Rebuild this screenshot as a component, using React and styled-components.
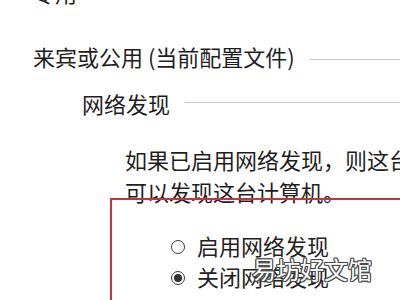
import React from 'react'
import styled, { createGlobalStyle } from 'styled-components'

const GlobalStyle = createGlobalStyle`
  html, body {
    margin: 0;
    padding: 0;
    background: #fff;
  }
  body {
    width: 400px;
    height: 300px;
    overflow: hidden;
    font-family: "Noto Sans CJK SC", "Noto Sans", sans-serif;
    color: #1e1e1e;
  }
`

function App() {
  return (
    <>
      <GlobalStyle />
      <Page>
        <Heading>专用</Heading>

        <HeadingRow>
          <Heading>来宾或公用 (当前配置文件)</Heading>
          <Rule $shift={3} />
        </HeadingRow>

        <HeadingRow $indent={49} $top={17}>
          <Heading>网络发现</Heading>
          <Rule $shift={-1} />
        </HeadingRow>

        <Description>
          如果已启用网络发现，则这台计算机可以发现其他网络计算机和设备，而且其他网络计算机也
          <br />
          可以发现这台计算机。
        </Description>

        <Highlight>
          <RadioRow>
            <Radio />
            启用网络发现
          </RadioRow>
          <RadioRow>
            <Radio $checked />
            关闭网络发现
          </RadioRow>
        </Highlight>

        <Watermark>易坊好文馆</Watermark>
      </Page>
    </>
  )
}

export default App

const Page = styled.div`
  position: relative;
  height: 300px;
  padding-left: 33px;
  margin-top: -23px;
`

const Heading = styled.div`
  font-size: 22px;
  line-height: 30px;
  white-space: nowrap;
`

const HeadingRow = styled.div`
  display: flex;
  align-items: center;
  gap: 15px;
  margin-top: ${props => props.$top ?? 34}px;
  padding-left: ${props => props.$indent ?? 0}px;
`

const Rule = styled.div`
  flex: 1;
  height: 1px;
  background: #c9c9c9;
  margin-top: ${props => props.$shift * 2}px;
`

const Description = styled.p`
  margin: 25px 0 0;
  padding-left: 92px;
  font-size: 22px;
  line-height: 32px;
  white-space: nowrap;
`

const Highlight = styled.div`
  margin: -9px 0 0 77px;
  width: 400px;
  height: 200px;
  border: 2px solid #c6333e;
  padding: 30px 0 0 59px;
  position: relative;
`

const RadioRow = styled.div`
  display: flex;
  align-items: center;
  gap: 12px;
  font-size: 22px;
  line-height: 31px;
  color: #222;
`

const Radio = styled.span`
  width: 14px;
  height: 14px;
  box-sizing: border-box;
  border: 1px solid #3a3a3a;
  border-radius: 50%;
  display: flex;
  align-items: center;
  justify-content: center;
  margin-top: 2px;

  &::after {
    content: "";
    width: 8px;
    height: 8px;
    border-radius: 50%;
    background: ${props => props.$checked ? '#333' : 'transparent'};
  }
`

const Watermark = styled.div`
  position: absolute;
  left: 252px;
  top: 278px;
  font-size: 24px;
  line-height: 28px;
  color: #fff;
  white-space: nowrap;
  text-shadow:
    1px 0 0 #4a4a4a,
    -1px 0 0 #4a4a4a,
    0 1px 0 #4a4a4a,
    0 -1px 0 #4a4a4a,
    1px 1px 0 #4a4a4a,
    -1px -1px 0 #4a4a4a,
    1px -1px 0 #4a4a4a,
    -1px 1px 0 #4a4a4a;
`
